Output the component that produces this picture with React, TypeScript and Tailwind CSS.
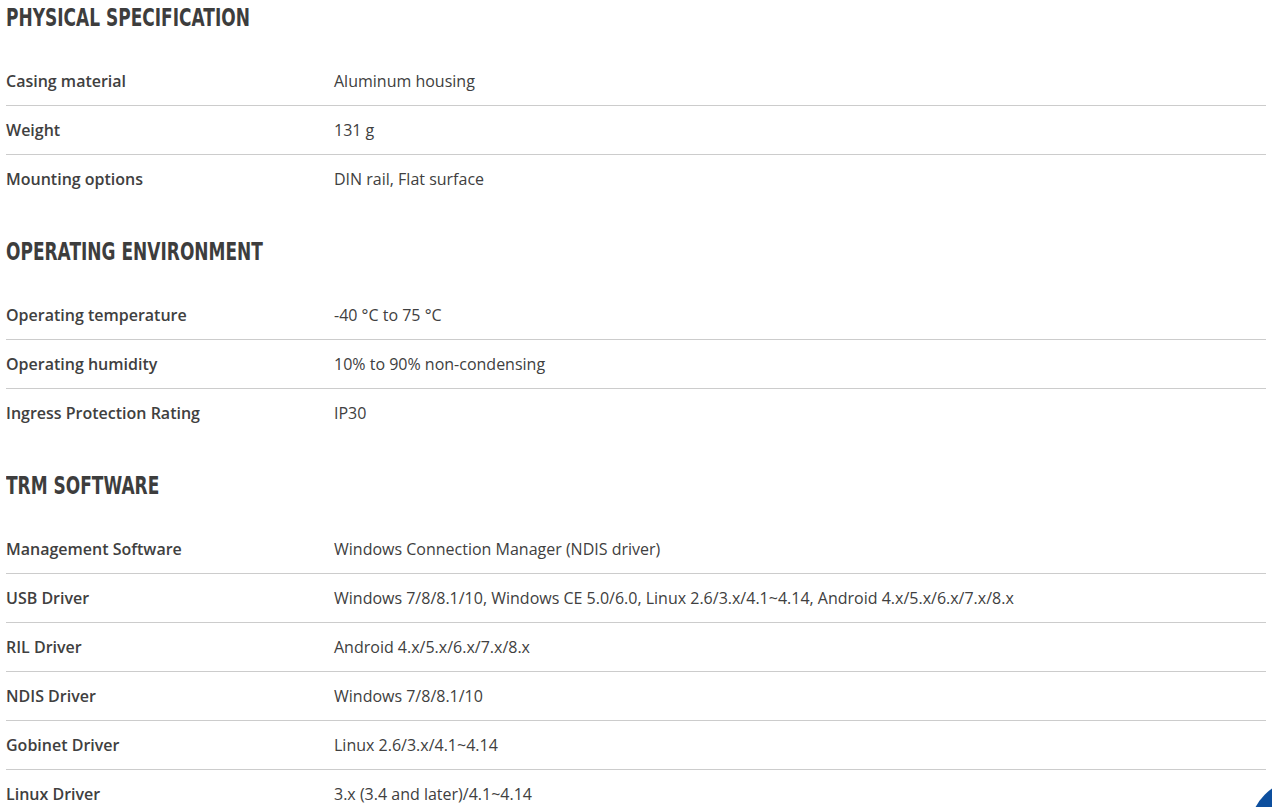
const sections: { title: string; rows: [string, string][] }[] = [
  {
    title: "PHYSICAL SPECIFICATION",
    rows: [
      ["Casing material", "Aluminum housing"],
      ["Weight", "131 g"],
      ["Mounting options", "DIN rail, Flat surface"],
    ],
  },
  {
    title: "OPERATING ENVIRONMENT",
    rows: [
      ["Operating temperature", "-40 °C to 75 °C"],
      ["Operating humidity", "10% to 90% non-condensing"],
      ["Ingress Protection Rating", "IP30"],
    ],
  },
  {
    title: "TRM SOFTWARE",
    rows: [
      ["Management Software", "Windows Connection Manager (NDIS driver)"],
      ["USB Driver", "Windows 7/8/8.1/10, Windows CE 5.0/6.0, Linux 2.6/3.x/4.1~4.14, Android 4.x/5.x/6.x/7.x/8.x"],
      ["RIL Driver", "Android 4.x/5.x/6.x/7.x/8.x"],
      ["NDIS Driver", "Windows 7/8/8.1/10"],
      ["Gobinet Driver", "Linux 2.6/3.x/4.1~4.14"],
      ["Linux Driver", "3.x (3.4 and later)/4.1~4.14"],
    ],
  },
];

export default function App() {
  return (
    <div className="relative h-[807px] overflow-hidden bg-white px-[6px] text-[#404040] [font-family:'Open_Sans',sans-serif]">
      {sections.map((section, i) => (
        <section key={section.title} className={i > 0 ? "mt-[31px]" : ""}>
          <h2 className="mb-[21px] h-[36px] whitespace-nowrap text-[25px] leading-[36px] font-bold text-[#3d3d3d] [font-family:'DejaVu_Sans',sans-serif]">
            <span className="inline-block origin-left scale-x-[0.68]">{section.title}</span>
          </h2>
          <div>
            {section.rows.map(([label, value], j) => (
              <div
                key={label}
                className={
                  "flex py-[12px] text-[16px] leading-[24px]" +
                  (j < section.rows.length - 1 ? " border-b border-[#cccccc]" : "")
                }
              >
                <div className="w-[328px] shrink-0 font-semibold">{label}</div>
                <div>{value}</div>
              </div>
            ))}
          </div>
        </section>
      ))}

      {/* chat widget bubble */}
      <div className="absolute left-[1250px] top-[780px] h-[100px] w-[100px] rounded-full bg-[#0d4f9e]" />
    </div>
  );
}
